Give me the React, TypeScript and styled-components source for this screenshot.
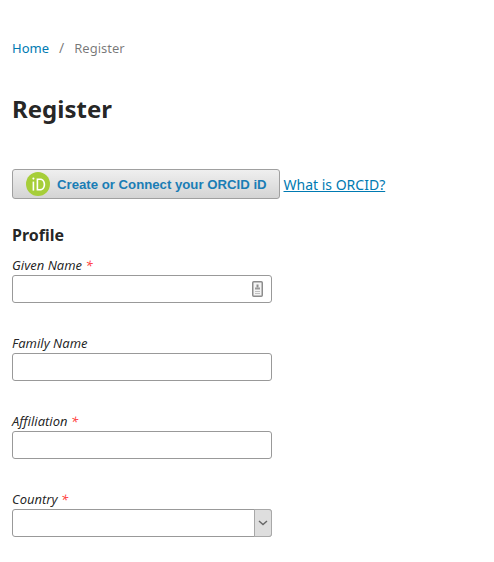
import * as React from "react";
import styled, { createGlobalStyle } from "styled-components";

const GlobalStyle = createGlobalStyle`
  html, body {
    margin: 0;
    padding: 0;
    background: #fff;
    font-family: "Noto Sans", sans-serif;
    color: rgba(0, 0, 0, 0.87);
  }
`;

const Page = styled.div`
  padding: 38px 12px 0;
  height: 524px;
  overflow: hidden;
`;

const Breadcrumbs = styled.nav`
  display: flex;
  align-items: center;
  height: 20px;
  font-size: 13px;
  line-height: 20px;
  color: rgba(0, 0, 0, 0.54);
`;

const Crumb = styled.a`
  color: #007ab2;
  text-decoration: none;
`;

const Separator = styled.span`
  padding: 0 10px;
  font-size: 14px;
`;

const Title = styled.h1`
  margin: 36px 0 0;
  font-size: 24px;
  line-height: 30px;
  font-weight: 700;
  color: rgba(0, 0, 0, 0.87);
`;

const OrcidRow = styled.div`
  display: flex;
  align-items: center;
  margin-top: 45px;
`;

const OrcidButton = styled.button`
  display: flex;
  align-items: center;
  box-sizing: border-box;
  width: 268px;
  height: 30px;
  padding: 0 0 0 13px;
  border: 1px solid #a0a0a0;
  border-radius: 3px;
  background: linear-gradient(to bottom, #efefef, #d4d4d4);
  font-family: "Liberation Sans", Arial, sans-serif;
  font-size: 13.2px;
  font-weight: 700;
  color: #1a7db5;
  white-space: nowrap;
`;

const OrcidLabel = styled.span`
  margin-left: 7px;
`;

const OrcidLink = styled.a`
  margin-left: 3.5px;
  font-size: 14px;
  color: #007ab2;
  text-decoration: underline;
`;

const SectionTitle = styled.h2`
  margin: 25px 0 0;
  font-size: 16px;
  line-height: 22px;
  font-weight: 700;
  color: rgba(0, 0, 0, 0.87);
`;

const Fields = styled.div`
  display: flex;
  flex-direction: column;
  gap: 32px;
  margin-top: 11px;
`;

const Field = styled.div`
  display: flex;
  flex-direction: column;
  width: 260px;
`;

const Label = styled.label`
  height: 18px;
  font-size: 13px;
  line-height: 16px;
  font-style: italic;
  color: rgba(0, 0, 0, 0.87);
`;

const Required = styled.span`
  color: #ff4040;
`;

const InputBox = styled.div`
  position: relative;
  box-sizing: border-box;
  height: 28px;
  border: 1px solid #999;
  border-radius: 3px;
  background: #fff;
`;

const AutofillIcon = styled.svg`
  position: absolute;
  right: 8px;
  top: 5px;
`;

const SelectArrow = styled.div`
  position: absolute;
  right: -1px;
  top: -1px;
  bottom: -1px;
  width: 18px;
  display: flex;
  align-items: center;
  justify-content: center;
  box-sizing: border-box;
  background: #dedede;
  border: 1px solid #a8a8a8;
  border-radius: 0 3px 3px 0;
`;

const ContactIcon = () => (
  <AutofillIcon width="11" height="16" viewBox="0 0 11 16">
    <rect x="0.75" y="0.75" width="9.5" height="14.5" rx="1" fill="#f4f4f4" stroke="#8c8c8c" strokeWidth="1.5" />
    <rect x="4.5" y="3.5" width="2" height="3" fill="#8c8c8c" />
    <rect x="3" y="6.5" width="5" height="2" fill="#9a9a9a" />
    <rect x="3" y="10" width="5" height="1" fill="#c0c0c0" />
    <rect x="3" y="12" width="5" height="1" fill="#c0c0c0" />
  </AutofillIcon>
);

const OrcidLogo = () => (
  <svg width="24" height="24" viewBox="0 0 24 24">
    <circle cx="12" cy="12" r="12" fill="#a6ce39" />
    <rect x="6.6" y="9.6" width="1.6" height="9" fill="#fff" />
    <circle cx="7.4" cy="6.6" r="1.05" fill="#fff" />
    <path
      d="M10.6 6.5h3.4c3.4 0 5.2 2.7 5.2 6s-1.8 6-5.2 6h-3.4zM12.2 8v9.1h1.8c2.5 0 3.6-2.1 3.6-4.6s-1.1-4.5-3.6-4.5z"
      fill="#fff"
      fillRule="evenodd"
    />
  </svg>
);

const Chevron = () => (
  <svg width="10" height="6" viewBox="0 0 10 6">
    <path d="M1 1l4 3.6L9 1" fill="none" stroke="#666" strokeWidth="1.4" />
  </svg>
);

const fields = [
  { label: "Given Name", required: true, kind: "contact" },
  { label: "Family Name", required: false, kind: "text" },
  { label: "Affiliation", required: true, kind: "text" },
  { label: "Country", required: true, kind: "select" },
];

export default function App() {
  return (
    <Page>
      <GlobalStyle />
      <Breadcrumbs>
        <Crumb href="#">Home</Crumb>
        <Separator>/</Separator>
        <span>Register</span>
      </Breadcrumbs>
      <Title>Register</Title>
      <OrcidRow>
        <OrcidButton type="button">
          <OrcidLogo />
          <OrcidLabel>Create or Connect your ORCID iD</OrcidLabel>
        </OrcidButton>
        <OrcidLink href="#">What is ORCID?</OrcidLink>
      </OrcidRow>
      <SectionTitle>Profile</SectionTitle>
      <Fields>
        {fields.map((f) => (
          <Field key={f.label}>
            <Label>
              {f.label}
              {f.required && <Required> *</Required>}
            </Label>
            <InputBox>
              {f.kind === "contact" && <ContactIcon />}
              {f.kind === "select" && (
                <SelectArrow>
                  <Chevron />
                </SelectArrow>
              )}
            </InputBox>
          </Field>
        ))}
      </Fields>
    </Page>
  );
}
